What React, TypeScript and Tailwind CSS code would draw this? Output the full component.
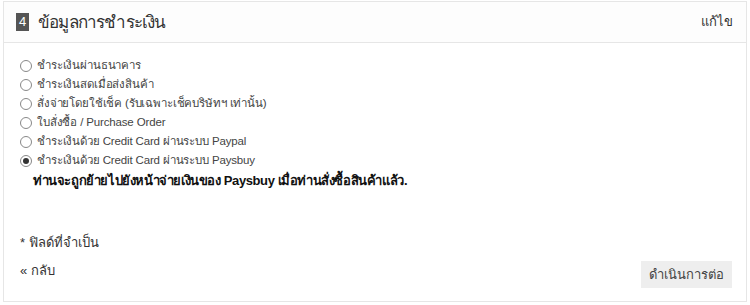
import React, { useState } from 'react'

const OPTIONS = [
  'ชำระเงินผ่านธนาคาร',
  'ชำระเงินสดเมื่อส่งสินค้า',
  'สั่งจ่ายโดยใช้เช็ค (รับเฉพาะเช็คบริษัทฯ เท่านั้น)',
  'ใบสั่งซื้อ / Purchase Order',
  'ชำระเงินด้วย Credit Card ผ่านระบบ Paypal',
  'ชำระเงินด้วย Credit Card ผ่านระบบ Paysbuy',
]

export default function App() {
  const [selected, setSelected] = useState(5)

  return (
    <div className="w-[750px] h-[305px] bg-white pt-[1px] pl-[3px] font-['Liberation_Sans','Noto_Sans',sans-serif]">
      <div className="w-[744px] h-[301px] border border-[#e6e6e6] flex flex-col">
        {/* Header */}
        <div className="h-[41px] border-b border-[#e6e6e6] bg-[#fdfdfd] flex items-center justify-between pl-[12px] pr-[13px]">
          <div className="flex items-center gap-[9px]">
            <span className="w-[13px] h-[18px] bg-[#555555] text-white text-[13px] leading-[18px] flex items-center justify-center">
              4
            </span>
            <span className="text-[17px] tracking-[-0.8px] text-[#333333] leading-none">ข้อมูลการชำระเงิน</span>
          </div>
          <span className="text-[13px] text-[#333333]">แก้ไข</span>
        </div>

        {/* Body */}
        <div className="flex-1 flex flex-col pl-[16px] pr-[14px] pt-[13px]">
          <div className="flex flex-col">
            {OPTIONS.map((label, i) => (
              <label key={i} className="h-[19px] flex items-center gap-[5px] cursor-pointer">
                <span className="w-[12px] h-[12px] rounded-full border border-[#888888] bg-white flex items-center justify-center">
                  {selected === i && <span className="w-[6px] h-[6px] rounded-full bg-[#333333]" />}
                </span>
                <input
                  type="radio"
                  name="payment"
                  className="hidden"
                  checked={selected === i}
                  onChange={() => setSelected(i)}
                />
                <span className="text-[11.5px] tracking-[-0.15px] text-[#444444]">{label}</span>
              </label>
            ))}
          </div>
          <p className="mt-[1px] pl-[13px] text-[13px] tracking-[-0.4px] font-bold text-[#111111]">
            ท่านจะถูกย้ายไปยังหน้าจ่ายเงินของ Paysbuy เมื่อท่านสั่งซื้อสินค้าแล้ว.
          </p>

          <div className="mt-[42px] text-[13px] text-[#333333]">* ฟิลด์ที่จำเป็น</div>
          <div className="mt-[9px] flex items-start justify-between">
            <a className="text-[13px] text-[#333333]">« กลับ</a>
            <button className="w-[91px] h-[27px] bg-[#eeeeee] text-[13px] text-[#444444]">
              ดำเนินการต่อ
            </button>
          </div>
        </div>
      </div>
    </div>
  )
}
